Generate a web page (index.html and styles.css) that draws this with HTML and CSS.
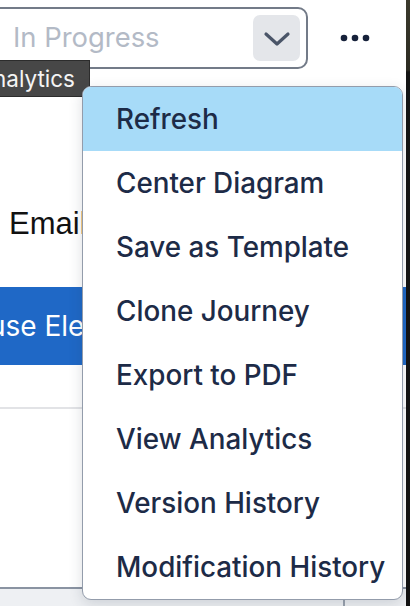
FILE: index.html
```html
<!DOCTYPE html>
<html lang="en">
<head>
<meta charset="utf-8">
<title>Journey</title>
<link rel="stylesheet" href="styles.css">
</head>
<body>
<div class="screen">
  <div class="app">
    <header class="toolbar">
      <div class="select">
        <span class="select-value">In Progress</span>
        <span class="select-btn">
          <svg width="28" height="16" viewBox="0 0 28 16"><path d="M3 3 L14 13 L25 3" fill="none" stroke="#4a5568" stroke-width="3.2" stroke-linecap="round" stroke-linejoin="round"/></svg>
        </span>
      </div>
      <button class="more" aria-label="More actions">
        <svg width="34" height="10" viewBox="0 0 34 10"><circle cx="5" cy="5" r="3.3" fill="#16213a"/><circle cx="16" cy="5" r="3.3" fill="#16213a"/><circle cx="27" cy="5" r="3.3" fill="#16213a"/></svg>
      </button>
    </header>
    <main class="content">
      <div class="field-label">Email Settings</div>
      <div class="primary-btn">Reuse Elements</div>
      <div class="divider"></div>
    </main>
    <footer class="footer"><span class="footer-cell"></span></footer>

    <div class="tooltip">View Analytics</div>

    <ul class="menu">
      <li class="menu-item active">Refresh</li>
      <li class="menu-item">Center Diagram</li>
      <li class="menu-item">Save as Template</li>
      <li class="menu-item">Clone Journey</li>
      <li class="menu-item">Export to PDF</li>
      <li class="menu-item">View Analytics</li>
      <li class="menu-item">Version History</li>
      <li class="menu-item">Modification History</li>
    </ul>
  </div>
  <div class="edge"></div>
</div>
</body>
</html>
```

FILE: styles.css
```css
* { box-sizing: border-box; }
html, body { margin: 0; padding: 0; }
body {
  width: 410px;
  height: 606px;
  overflow: hidden;
  font-family: Inter, "Noto Sans", sans-serif;
  background: #ffffff;
}
.screen {
  display: flex;
  width: 410px;
  height: 606px;
}
.app {
  position: relative;
  flex: 1;
  display: flex;
  flex-direction: column;
  background: #ffffff;
  overflow: hidden;
}
.edge {
  width: 4px;
  background: linear-gradient(#3b3a2c 0, #2c2b22 70px, #141414 72px, #111 100%);
}
.toolbar {
  display: flex;
  align-items: flex-start;
  height: 76px;
  padding-top: 7px;
  flex: none;
}
.select {
  display: flex;
  align-items: center;
  margin-left: -14px;
  width: 322px;
  height: 62px;
  border: 2px solid #737b88;
  border-radius: 10px;
  padding-left: 25px;
  padding-right: 6px;
}
.select-value {
  flex: 1;
  font-size: 27.4px;
  color: #b3bac6;
  margin-top: -2px;
}
.select-btn {
  width: 47px;
  height: 46px;
  border-radius: 7px;
  background: #e4e6ea;
  display: flex;
  align-items: center;
  justify-content: center;
  padding-top: 2px;
}
.more {
  margin: 25px 0 0 30px;
  padding: 0;
  border: 0;
  background: none;
  width: 36px;
  height: 12px;
  display: flex;
  align-items: center;
  justify-content: center;
}
.content {
  flex: 1;
  display: flex;
  flex-direction: column;
}
.field-label {
  margin-top: 128px;
  padding-left: 9px;
  font-family: "Liberation Sans", Arial, sans-serif;
  font-size: 31px;
  line-height: 40px;
  color: #111;
  white-space: nowrap;
}
.primary-btn {
  margin-top: 43px;
  margin-left: -82px;
  height: 78px;
  background: #1f68c6;
  color: #fff;
  font-size: 28px;
  line-height: 78px;
  padding-left: 37px;
  white-space: nowrap;
}
.divider {
  margin-top: 42px;
  height: 2px;
  background: #e2e3e6;
}
.footer {
  flex: none;
  height: 19px;
  border-top: 2px solid #8a93a2;
  background: #eef0f3;
  display: flex;
  padding-left: 343px;
}
.footer-cell {
  width: 2px;
  background: #9aa2ae;
}
.tooltip {
  position: absolute;
  top: 60px;
  right: 316px;
  height: 37px;
  padding: 0 14px 0 14px;
  background: #474747;
  border: 1px solid #2c2c2c;
  color: #f4f4f4;
  font-size: 22.5px;
  line-height: 35px;
  white-space: nowrap;
}
.menu {
  position: absolute;
  top: 86px;
  left: 82px;
  width: 321px;
  margin: 0;
  padding: 0;
  list-style: none;
  background: #fff;
  border: 1.5px solid #939cab;
  border-radius: 9px;
  overflow: hidden;
  box-shadow: 0 4px 14px rgba(40, 50, 70, 0.16);
}
.menu-item {
  height: 64px;
  display: flex;
  align-items: center;
  padding-left: 33px;
  font-size: 27.8px;
  font-weight: 500;
  color: #1d2b47;
  white-space: nowrap;
}
.menu-item.active {
  background: #a7dbf8;
}
```
